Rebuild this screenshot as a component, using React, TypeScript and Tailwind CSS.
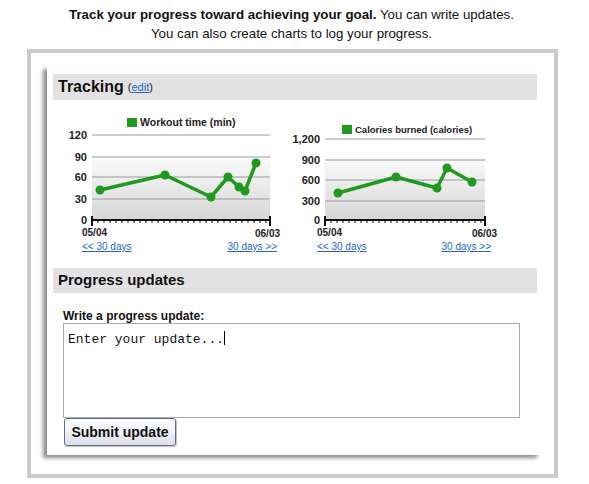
import React from "react";

const GREEN = "#1f9a1f";

function Chart({
  width,
  legend,
  legendX,
  legendY,
  legendSize,
  axisLeft,
  axisRight,
  labels,
  points,
  xLabelLeft,
  xLabelRight,
}: {
  width: number;
  legend: string;
  legendX: number;
  legendY: number;
  legendSize: number;
  axisLeft: number;
  axisRight: number;
  labels: { text: string; y: number }[];
  points: [number, number][];
  xLabelLeft: number;
  xLabelRight: number;
}) {
  const ticks: number[] = [];
  for (let x = axisLeft; x <= axisRight; x += 6) ticks.push(x);
  const gid = "bg" + legendX;
  return (
    <svg width={width} height={128} className="block">
      <defs>
        <linearGradient id={gid} x1="0" y1="0" x2="0" y2="1">
          <stop offset="0" stopColor="#ffffff" />
          <stop offset="1" stopColor="#d6d6d6" />
        </linearGradient>
      </defs>
      <rect x={legendX} y={legendY} width={10} height={9} fill={GREEN} />
      <text x={legendX + 13} y={legendY + 8} fontSize={legendSize} fontWeight="bold" fill="#222" fontFamily="Liberation Sans, Arial, sans-serif">
        {legend}
      </text>
      <rect x={axisLeft} y={40} width={axisRight - axisLeft} height={70} fill={`url(#${gid})`} />
      {labels.map((l, i) => (
        <g key={l.text}>
          {i < labels.length - 1 && (
            <line x1={axisLeft} x2={axisRight} y1={l.y} y2={l.y} stroke="#9a9a9a" strokeWidth="1" />
          )}
          <text x={axisLeft - 5} y={l.y + 4} textAnchor="end" fontSize="11" fontWeight="bold" fill="#222" fontFamily="Liberation Sans, Arial, sans-serif">
            {l.text}
          </text>
        </g>
      ))}
      <line x1={axisLeft} x2={axisRight} y1={110} y2={110} stroke="#111" strokeWidth="2" />
      {ticks.map((x) => (
        <line key={x} x1={x} x2={x} y1={110} y2={113} stroke="#111" strokeWidth="1" />
      ))}
      <line x1={axisLeft} x2={axisLeft} y1={106} y2={116} stroke="#111" strokeWidth="2" />
      <line x1={axisRight} x2={axisRight} y1={106} y2={116} stroke="#111" strokeWidth="2" />
      <polyline
        points={points.map((p) => p.join(",")).join(" ")}
        fill="none"
        stroke={GREEN}
        strokeWidth="3.5"
        strokeLinejoin="round"
      />
      {points.map((p, i) => (
        <circle key={i} cx={p[0]} cy={p[1]} r="4.5" fill={GREEN} />
      ))}
      <text x={xLabelLeft} y={126} fontSize="10" fontWeight="bold" fill="#222" fontFamily="Liberation Sans, Arial, sans-serif">
        05/04
      </text>
      <text x={xLabelRight} y={127} fontSize="10" fontWeight="bold" fill="#222" fontFamily="Liberation Sans, Arial, sans-serif">
        06/03
      </text>
    </svg>
  );
}

function DayLinks({ pl, pr }: { pl: string; pr: string }) {
  return (
    <div className={`mt-[2px] flex justify-between h-[14px] text-[10px] leading-[14px] text-[#1f66c9] ${pl} ${pr}`}>
      <a href="#" className="underline">&lt;&lt; 30 days</a>
      <a href="#" className="underline">30 days &gt;&gt;</a>
    </div>
  );
}

export default function App() {
  return (
    <div className="w-[589px] h-[484px] bg-white overflow-hidden text-[#111]" style={{ fontFamily: "'Liberation Sans', Arial, sans-serif" }}>
      <div className="pt-[5px] text-center text-[13.3px] leading-[19px] pr-[6px]">
        <p>
          <b>Track your progress toward achieving your goal.</b> You can write updates.
        </p>
        <p>You can also create charts to log your progress.</p>
      </div>

      <div className="ml-[27px] mt-[6px] w-[531px] h-[429px] border-4 border-[#cbcbcb] bg-white">
        <div className="ml-[16px] mt-[13px] w-[494px] h-[389px] bg-white pl-[6px] pt-[8px] shadow-[-4px_3px_4px_rgba(0,0,0,0.45)]">
          <div className="w-[484px] h-[26px] bg-[#e2e2e2] flex items-center pl-[5px]">
            <span className="text-[16px] font-bold text-[#111]">Tracking</span>
            <span className="ml-[4px] text-[11px] text-[#222]">
              (<a href="#" className="underline text-[#1f66c9]">edit</a>)
            </span>
          </div>

          <div className="flex mt-[10px] ml-[9px] gap-[8px]">
            <div className="w-[222px]">
              <Chart
                width={222}
                legend="Workout time (min)"
                legendX={65}
                legendY={8}
                legendSize={10.5}
                axisLeft={30}
                axisRight={208}
                labels={[
                  { text: "120", y: 25 },
                  { text: "90", y: 47 },
                  { text: "60", y: 67 },
                  { text: "30", y: 89 },
                  { text: "0", y: 110 },
                ]}
                points={[
                  [38, 80],
                  [103, 65],
                  [149, 87],
                  [166, 67],
                  [177, 77],
                  [183, 81],
                  [194, 53],
                ]}
                xLabelLeft={20}
                xLabelRight={193}
              />
              <DayLinks pl="pl-[20px]" pr="pr-[7px]" />
            </div>
            <div className="w-[205px]">
              <Chart
                width={205}
                legend="Calories burned (calories)"
                legendX={50}
                legendY={15}
                legendSize={9.5}
                axisLeft={33}
                axisRight={193}
                labels={[
                  { text: "1,200", y: 29 },
                  { text: "900", y: 50 },
                  { text: "600", y: 70 },
                  { text: "300", y: 91 },
                  { text: "0", y: 110 },
                ]}
                points={[
                  [46, 83],
                  [104, 67],
                  [145, 78],
                  [155, 58],
                  [180, 72],
                ]}
                xLabelLeft={25}
                xLabelRight={180}
              />
              <DayLinks pl="pl-[25px]" pr="pr-[6px]" />
            </div>
          </div>

          <div className="mt-[14px] w-[484px] h-[25px] bg-[#e2e2e2] flex items-center pl-[5px]">
            <span className="text-[15px] font-bold text-[#111]">Progress updates</span>
          </div>

          <div className="ml-[10px] mt-[16px] text-[12px] leading-[14px] font-bold text-[#111]">
            Write a progress update:
          </div>
          <div className="ml-[10px] w-[457px] h-[95px] border border-[#aaaaaa] bg-white px-[4px] pt-[2px]">
            <span className="text-[13px] leading-[16px] text-[#111]" style={{ fontFamily: "'Liberation Mono', 'Courier New', monospace" }}>
              Enter your update...
            </span>
            <span className="inline-block w-px h-[14px] bg-black align-[-2px]" />
          </div>
          <button className="ml-[11px] w-[112px] h-[28px] rounded-[3px] border border-[#5f6f86] bg-gradient-to-b from-white to-[#dcdfe8] text-[14px] font-bold text-[#111] shadow-[1px_1px_1px_rgba(0,0,0,0.25)]">
            Submit update
          </button>
        </div>
      </div>
    </div>
  );
}
